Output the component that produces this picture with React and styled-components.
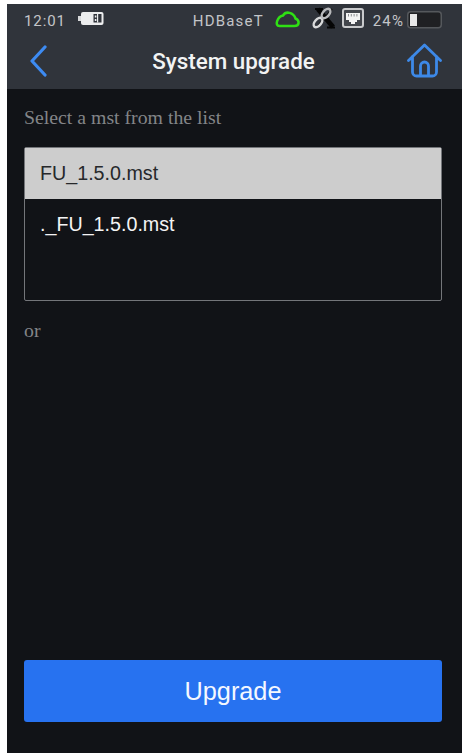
import styled, { createGlobalStyle } from "styled-components";

const GlobalStyle = createGlobalStyle`
  html, body {
    margin: 0;
    padding: 0;
    background: #fff;
  }
`;

const Page = styled.div`
  width: 462px;
  height: 755px;
  padding: 4px 0 2px 7px;
  box-sizing: border-box;
  overflow: hidden;
`;

const Phone = styled.div`
  height: 100%;
  display: flex;
  flex-direction: column;
  background: #111317;
`;

const Header = styled.div`
  height: 85px;
  background: #30343b;
  display: flex;
  flex-direction: column;
`;

const StatusBar = styled.div`
  height: 33px;
  padding: 0 20px 0 17px;
  display: flex;
  align-items: center;
  font: 15px Roboto, sans-serif;
  letter-spacing: 0.9px;
  color: #c3c5c8;
`;

const StatusGroup = styled.div`
  margin-left: auto;
  display: flex;
  align-items: center;
`;

const Time = styled.span`
  margin-right: 12px;
`;

const BaseT = styled.span`
  letter-spacing: 1.2px;
`;

const Percent = styled.span`
  margin: 0 3px 0 9px;
  letter-spacing: 1.1px;
`;

const IconSlot = styled.span`
  display: flex;
  margin-left: ${(props) => props.$left || 0}px;
  margin-bottom: ${(props) => props.$lift || 0}px;
`;

const NavBar = styled.div`
  flex: 1;
  padding: 0 20px 5px 23px;
  display: flex;
  align-items: center;
  justify-content: space-between;
`;

const Title = styled.div`
  font: 500 22.4px Roboto, sans-serif;
  color: #f2f3f3;
  margin-left: 13px;
`;

const Content = styled.div`
  flex: 1;
  padding: 0 20px 31px 17px;
  display: flex;
  flex-direction: column;
`;

const Hint = styled.div`
  font: 19.8px "Liberation Serif", serif;
  color: #838588;
  margin-top: ${(props) => props.$top}px;
  line-height: 20px;
`;

const FileList = styled.div`
  margin-top: 20px;
  height: 154px;
  box-sizing: border-box;
  border: 1px solid #74767a;
  border-radius: 2px;
`;

const FileRow = styled.div`
  height: 51px;
  padding-left: 15px;
  display: flex;
  align-items: center;
  font: 19.7px "Liberation Sans", sans-serif;
  color: ${(props) => (props.$selected ? "#26282b" : "#f4f4f5")};
  background: ${(props) => (props.$selected ? "#cdcdcd" : "transparent")};
`;

const UpgradeButton = styled.button`
  margin-top: auto;
  height: 62px;
  border: none;
  border-radius: 3px;
  background: #2772f0;
  color: #f4f8ff;
  font: 25.3px "Liberation Sans", sans-serif;
`;

function App() {
  return (
    <>
      <GlobalStyle />
      <Page>
        <Phone>
          <Header>
            <StatusBar>
              <Time>12:01</Time>
              <IconSlot $lift={4}>
                <svg width="26" height="15" viewBox="0 0 26 15">
                  <rect x="0" y="5" width="4" height="5" fill="#d8d9da" />
                  <rect x="3" y="1" width="22.500" height="13" rx="2" fill="#ecedee" />
                  <rect x="15.500" y="3" width="8" height="8.500" fill="#30343b" />
                  <rect x="19" y="3" width="1.200" height="8.500" fill="#ecedee" />
                  <rect x="16.800" y="4.500" width="1.600" height="2" fill="#ecedee" />
                  <rect x="16.800" y="8" width="1.600" height="2" fill="#ecedee" />
                </svg>
              </IconSlot>
              <StatusGroup>
                <BaseT>HDBaseT</BaseT>
                <IconSlot $left={10} $lift={4}>
                  <svg width="27" height="18" viewBox="0 0 27 18">
                    <path
                      d="M5.500 16H20.500C25.500 16 26 10.500 21.500 8.500 19.500 2.500 12 .5 9 5.500 3.500 6.500 0 16 5.500 16z"
                      fill="none"
                      stroke="#2fe014"
                      strokeWidth="2.500"
                    />
                  </svg>
                </IconSlot>
                <IconSlot $left={11} $lift={6}>
                  <svg width="24" height="22" viewBox="0 0 24 22">
                    <path d="M6 2l15 18" stroke="#050505" strokeWidth="5" />
                    <path d="M3 2h8M15 20.500h8" stroke="#050505" strokeWidth="1.800" />
                    <path d="M20 2L5 20" stroke="#050505" strokeWidth="1.500" />
                    <ellipse cx="6" cy="15.500" rx="5.500" ry="3.200" transform="rotate(-50 6 15.500)" fill="none" stroke="#d8d9da" strokeWidth="2.500" />
                    <ellipse cx="14" cy="6.500" rx="5.500" ry="3.200" transform="rotate(-50 14 6.500)" fill="none" stroke="#b8b9bb" strokeWidth="2.500" />
                  </svg>
                </IconSlot>
                <IconSlot $left={6} $lift={5}>
                  <svg width="22" height="20" viewBox="0 0 22 20">
                    <rect x="1" y="1" width="20" height="18" rx="2" fill="#43464c" stroke="#c9cacc" strokeWidth="2" />
                    <path d="M4 5h14v7h-3v2h-2v2H9v-2H7v-2H4z" fill="#f4f4f4" />
                    <path d="M6.500 6v2.500M9.300 6v2.500M12.100 6v2.500M14.900 6v2.500" stroke="#8b8d90" strokeWidth="1" />
                  </svg>
                </IconSlot>
                <Percent>24%</Percent>
                <IconSlot $lift={2}>
                  <svg width="35" height="18" viewBox="0 0 35 18">
                    <rect x="0.750" y="0.750" width="33.500" height="16" rx="3" fill="#1f2023" stroke="#55585c" strokeWidth="1.500" />
                    <rect x="3" y="3" width="7" height="12" fill="#e8e8e8" />
                  </svg>
                </IconSlot>
              </StatusGroup>
            </StatusBar>
            <NavBar>
              <svg width="17" height="32" viewBox="0 0 17 32">
                <path d="M15 2L2 16l13 14" fill="none" stroke="#3d8bf2" strokeWidth="3.200" strokeLinecap="round" strokeLinejoin="round" />
              </svg>
              <Title>System upgrade</Title>
              <svg width="35" height="35" viewBox="0 0 35 35">
                <path
                  d="M1.500 17.500L17.500 2l16 15.500M5.500 13.500V29a4 4 0 0 0 4 4h16a4 4 0 0 0 4-4V13.500M13.500 33V23a4 4 0 0 1 8 0v10"
                  fill="none"
                  stroke="#3d89e8"
                  strokeWidth="2.800"
                  strokeLinecap="round"
                  strokeLinejoin="round"
                />
              </svg>
            </NavBar>
          </Header>
          <Content>
            <Hint $top={18}>Select a mst from the list</Hint>
            <FileList>
              <FileRow $selected>FU_1.5.0.mst</FileRow>
              <FileRow>._FU_1.5.0.mst</FileRow>
            </FileList>
            <Hint $top={19}>or</Hint>
            <UpgradeButton>Upgrade</UpgradeButton>
          </Content>
        </Phone>
      </Page>
    </>
  );
}

export default App;
